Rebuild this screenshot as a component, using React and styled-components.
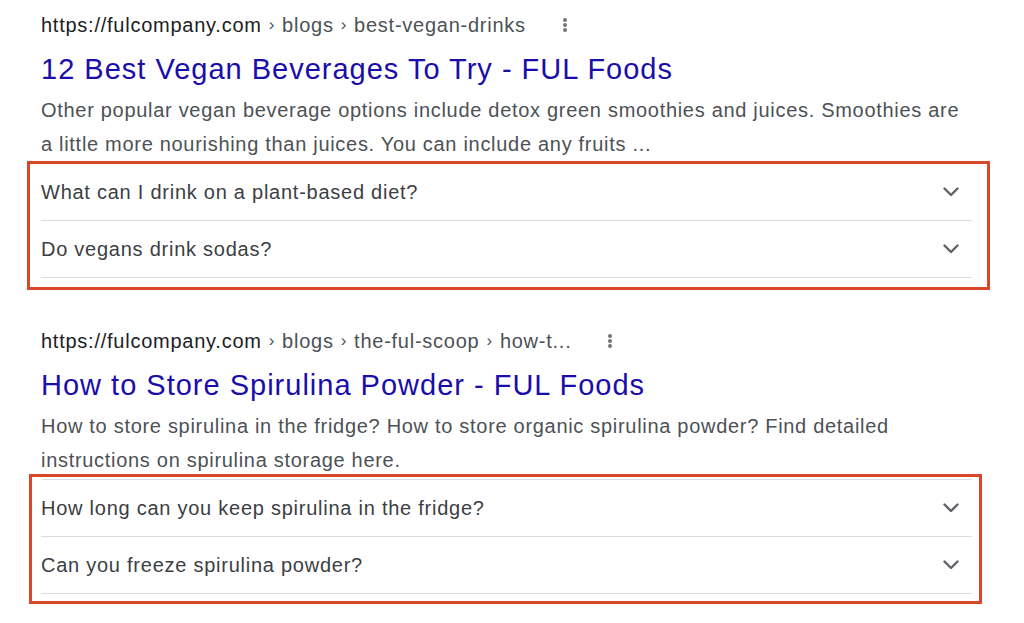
import React from "react"
import styled, { createGlobalStyle } from "styled-components"

const GlobalStyle = createGlobalStyle`
  body {
    margin: 0;
    background: #ffffff;
    font-family: "Liberation Sans", Arial, Helvetica, sans-serif;
  }
`

const Page = styled.main`
  width: 1024px;
  height: 623px;
  overflow: hidden;
  padding-top: 10px;
  box-sizing: border-box;
  background: #ffffff;
`

const Result = styled.section`
  margin-top: ${({ $top }) => $top}px;
`

const Head = styled.div`
  padding-left: 41px;
`

const UrlLine = styled.div`
  display: flex;
  align-items: center;
  height: 30px;
  font-size: 20px;
  letter-spacing: 0.75px;
  color: #4d5156;
  white-space: nowrap;

  b {
    font-weight: normal;
    color: #202124;
  }
`

const Sep = styled.span`
  margin: 0 7px;
  font-size: 17px;
`

const Dots = styled.span`
  display: flex;
  flex-direction: column;
  gap: 1px;
  margin-left: 37px;

  i {
    width: 4px;
    height: 4px;
    border-radius: 50%;
    background: #70757a;
  }
`

const Title = styled.h3`
  margin: 9px 0 4px;
  font-size: 29px;
  letter-spacing: 1px;
  line-height: 40px;
  font-weight: normal;
  color: #1a0dab;
  white-space: nowrap;
`

const Snippet = styled.p`
  margin: 0;
  width: 932px;
  font-size: 20px;
  letter-spacing: 0.7px;
  line-height: 34px;
  color: #4d5156;
`

const Box = styled.div`
  margin-top: ${({ $shift }) => $shift}px;
  margin-left: ${({ $left }) => $left}px;
  width: ${({ $width }) => $width}px;
  box-sizing: border-box;
  border: 3px solid #d9472b;
  padding: ${({ $pad }) => $pad};
`

const List = styled.div`
  width: 930px;
  border-top: ${({ $topLine }) => ($topLine ? "1px solid #dadce0" : "none")};
`

const Row = styled.div`
  display: flex;
  align-items: center;
  justify-content: space-between;
  height: 56px;
  border-bottom: 1.5px solid #dadce0;
  padding-right: 13px;
  font-size: 20px;
  letter-spacing: 0.75px;
  color: #3c4043;
  margin-left: -1px;
`

const Chevron = () => (
  <svg width="16" height="10" viewBox="0 0 16 10" fill="none">
    <path d="M1.5 1.5 L8 8 L14.5 1.5" stroke="#5f6368" strokeWidth="2.4" strokeLinecap="round" strokeLinejoin="round" />
  </svg>
)

const results = [
  {
    top: 0,
    crumbs: ["blogs", "best-vegan-drinks"],
    title: "12 Best Vegan Beverages To Try - FUL Foods",
    snippet:
      "Other popular vegan beverage options include detox green smoothies and juices. Smoothies are a little more nourishing than juices. You can include any fruits ...",
    box: { shift: 0, left: 27, width: 963, pad: "0 15px 9px 12px", topLine: false },
    faqs: ["What can I drink on a plant-based diet?", "Do vegans drink sodas?"],
  },
  {
    top: 36,
    crumbs: ["blogs", "the-ful-scoop", "how-t..."],
    title: "How to Store Spirulina Powder - FUL Foods",
    snippet:
      "How to store spirulina in the fridge? How to store organic spirulina powder? Find detailed instructions on spirulina storage here.",
    box: { shift: -3, left: 29, width: 953, pad: "2px 7px 7px 10px", topLine: true },
    faqs: ["How long can you keep spirulina in the fridge?", "Can you freeze spirulina powder?"],
  },
]

export default function App() {
  return (
    <Page>
      <GlobalStyle />
      {results.map((r) => (
        <Result key={r.title} $top={r.top}>
          <Head>
            <UrlLine>
              <b>https://fulcompany.com</b>
              {r.crumbs.map((c) => (
                <React.Fragment key={c}>
                  <Sep>›</Sep>
                  {c}
                </React.Fragment>
              ))}
              <Dots>
                <i />
                <i />
                <i />
              </Dots>
            </UrlLine>
            <Title>{r.title}</Title>
            <Snippet>{r.snippet}</Snippet>
          </Head>
          <Box $shift={r.box.shift} $left={r.box.left} $width={r.box.width} $pad={r.box.pad}>
            <List $topLine={r.box.topLine}>
              {r.faqs.map((q) => (
                <Row key={q}>
                  {q}
                  <Chevron />
                </Row>
              ))}
            </List>
          </Box>
        </Result>
      ))}
    </Page>
  )
}
